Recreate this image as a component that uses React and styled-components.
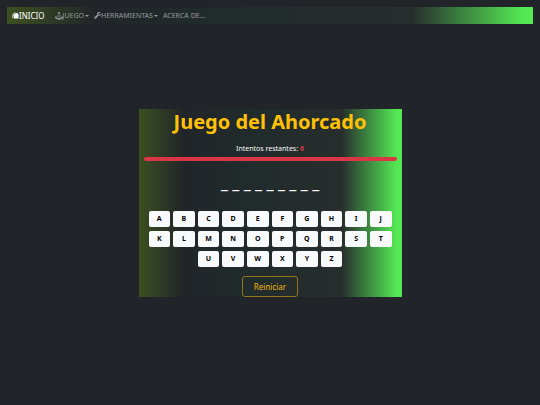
import { useState } from "react";
import styled, { createGlobalStyle } from "styled-components";
import { BsHousesFill, BsJoystick, BsWrenchAdjustable } from "react-icons/bs";

const GlobalStyle = createGlobalStyle`
  * {
    box-sizing: border-box;
  }

  body {
    margin: 0;
    background-color: #212529;
    color: #f8f9fa;
    font-family: "Noto Sans", "Liberation Sans", sans-serif;
  }
`;

const gradient = `linear-gradient(
  90deg,
  #3c4f21 0%,
  #212529 17%,
  #212b2b 40%,
  #272e2d 77%,
  #54e854 98%
)`;

const Page = styled.div`
  min-height: 100vh;
  padding: 7px;
  display: flex;
  flex-direction: column;
`;

const Navbar = styled.nav`
  padding: 0 5px;
  height: 17px;
  display: flex;
  align-items: center;
  background: ${gradient};
`;

const Brand = styled.a`
  margin-right: 10px;
  display: flex;
  align-items: center;
  color: #fff;
  font-size: 8px;
  text-decoration: none;
`;

const Menu = styled.div`
  display: flex;
  align-items: center;
  gap: 5px;
`;

const MenuLink = styled.a`
  display: flex;
  align-items: center;
  color: #989b9c;
  font-size: 7px;
  text-decoration: none;

  &:hover {
    color: #fff;
  }
`;

const Caret = styled.span`
  margin-left: 1px;
  border-top: 2px solid;
  border-left: 2px solid transparent;
  border-right: 2px solid transparent;
`;

const Main = styled.main`
  flex: 1;
  padding-bottom: 17px;
  display: flex;
  align-items: center;
  justify-content: center;
`;

const Game = styled.section`
  width: 50%;
  padding: 0 5px;
  display: flex;
  flex-direction: column;
  align-items: center;
  background: ${gradient};
`;

const Title = styled.h1`
  margin: 0 0 8px;
  color: #ffc107;
  font-size: 20px;
  font-weight: 700;
  line-height: 26px;
  white-space: nowrap;
`;

const Attempts = styled.p`
  margin: 0 0 2px;
  font-size: 7px;
  line-height: 12px;
`;

const Remaining = styled.span`
  color: #dc3545;
  font-weight: 700;
`;

const Bar = styled.div`
  width: 100%;
  height: 4px;
  border-radius: 2px;
  background-color: #343a40;
  overflow: hidden;
`;

const BarFill = styled.div`
  height: 100%;
  background-color: #dc3545;
`;

const Word = styled.p`
  margin: 10px 0 18px;
  font-size: 17px;
  font-weight: 700;
  line-height: 22px;
`;

const Keyboard = styled.div`
  width: 100%;
  padding: 0 5px;
  display: grid;
  grid-template-columns: repeat(10, 1fr);
  grid-auto-rows: 16px;
  gap: 4px 3px;
`;

const Key = styled.button`
  padding: 0;
  border: 0;
  border-radius: 2px;
  background-color: #f8f9fa;
  color: #000;
  font-family: inherit;
  font-size: 7px;
  font-weight: 700;
  cursor: pointer;

  &:nth-child(21) {
    grid-column-start: 3;
  }

  &:disabled {
    opacity: 0.65;
  }
`;

const Restart = styled.button`
  margin-top: 9px;
  height: 21px;
  padding: 0 11px;
  border: 1px solid #92751b;
  border-radius: 3px;
  background-color: transparent;
  color: #f0b70a;
  font-family: inherit;
  font-size: 8px;
  cursor: pointer;
`;

const WORD = "DESTORNIL";
const MAX_ATTEMPTS = 6;
const LETTERS = "ABCDEFGHIJKLMNOPQRSTUVWXYZ".split("");

const App = () => {
  const [used, setUsed] = useState([]);

  const misses = used.filter((letter) => !WORD.includes(letter)).length;
  const remaining = MAX_ATTEMPTS - misses;
  const shown = WORD.split("").map((letter) => (used.includes(letter) ? letter : "_"));

  return (
    <>
      <GlobalStyle />
      <Page>
        <Navbar>
          <Brand href="#">
            <BsHousesFill size={7} />
            INICIO
          </Brand>
          <Menu>
            <MenuLink href="#juego">
              <BsJoystick size={8} />
              JUEGO
              <Caret />
            </MenuLink>
            <MenuLink href="#herramientas">
              <BsWrenchAdjustable size={7} />
              HERRAMIENTAS
              <Caret />
            </MenuLink>
            <MenuLink href="#acerca">ACERCA DE...</MenuLink>
          </Menu>
        </Navbar>
        <Main>
          <Game>
            <Title>Juego del Ahorcado</Title>
            <Attempts>
              Intentos restantes: <Remaining>{remaining}</Remaining>
            </Attempts>
            <Bar>
              <BarFill style={{ width: `${(remaining / MAX_ATTEMPTS) * 100}%` }} />
            </Bar>
            <Word>{shown.join(" ")}</Word>
            <Keyboard>
              {LETTERS.map((letter) => (
                <Key
                  key={letter}
                  disabled={used.includes(letter) || remaining === 0}
                  onClick={() => setUsed([...used, letter])}
                >
                  {letter}
                </Key>
              ))}
            </Keyboard>
            <Restart onClick={() => setUsed([])}>Reiniciar</Restart>
          </Game>
        </Main>
      </Page>
    </>
  );
};

export default App;
